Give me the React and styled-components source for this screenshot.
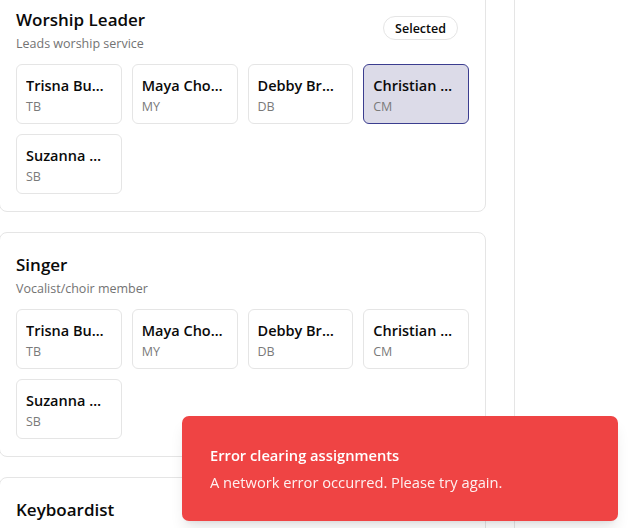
import React from "react";
import styled, { createGlobalStyle } from "styled-components";

const Global = createGlobalStyle`
  html, body { margin: 0; padding: 0; background: #ffffff; }
  body {
    font-family: "Open Sans", "Noto Sans", sans-serif;
    color: #0a0a0a;
    overflow: hidden;
    height: 528px;
  }
  * { box-sizing: border-box; }
`;

const Page = styled.div`
  display: flex;
  height: 528px;
  overflow: hidden;
`;

const Main = styled.main`
  flex: 0 0 515px;
  margin-left: -1px;
  padding-right: 28px;
  display: flex;
  flex-direction: column;
  gap: 20px;
  margin-top: -13px;
`;

const Aside = styled.aside`
  flex: 1;
  border-left: 1px solid #e5e5e5;
  background: #ffffff;
`;

const Card = styled.section`
  border: 1px solid #e5e5e5;
  border-radius: 8px;
  padding: 20px 16px 17px;
  background: #fff;
  flex-shrink: 0;
`;

const Header = styled.div`
  display: flex;
  align-items: flex-start;
  justify-content: space-between;
`;

const TitleBlock = styled.div`
  display: flex;
  flex-direction: column;
`;

const Title = styled.h3`
  margin: 0;
  font-size: 17px;
  line-height: 24px;
  font-weight: 600;
`;

const Subtitle = styled.p`
  margin: 3px 0 0;
  font-size: 12.5px;
  line-height: 18px;
  color: #737373;
`;

const Badge = styled.span`
  margin: 8px 11px 0 0;
  height: 24px;
  padding: 0 11px;
  border: 1px solid #e5e5e5;
  border-radius: 999px;
  font-size: 12.5px;
  font-weight: 600;
  display: inline-flex;
  align-items: center;
`;

const Grid = styled.div`
  margin-top: 11px;
  display: grid;
  grid-template-columns: repeat(4, 1fr);
  gap: 10px;
`;

const Tile = styled.button`
  font-family: inherit;
  text-align: left;
  height: 60px;
  padding: 10px 11px 0 9px;
  border-radius: 6px;
  border: 1px solid ${(p) => (p.$selected ? "#3b3d8f" : "#e5e5e5")};
  background: ${(p) => (p.$selected ? "#dcdbe8" : "#ffffff")};
  display: flex;
  flex-direction: column;
  justify-content: flex-start;
  gap: 1px;
  min-width: 0;
  cursor: pointer;
`;

const Name = styled.span`
  display: block;
  font-size: 14.5px;
  line-height: 21px;
  font-weight: 600;
  color: #0a0a0a;
  white-space: nowrap;
  overflow: hidden;
  text-overflow: ellipsis;
`;

const Initials = styled.span`
  display: block;
  font-size: 12.5px;
  line-height: 20px;
  color: #7a7a7a;
`;

const Toast = styled.div`
  position: fixed;
  right: 13px;
  bottom: 7px;
  width: 436px;
  height: 105px;
  background: #ef4444;
  color: #fff;
  border-radius: 7px;
  padding: 29px 28px 28px;
  display: flex;
  flex-direction: column;
  gap: 7px;
  box-shadow: 0 10px 15px -3px rgba(0,0,0,0.1), 0 4px 6px -4px rgba(0,0,0,0.1);
`;

const ToastTitle = styled.div`
  font-size: 14.7px;
  line-height: 20px;
  font-weight: 600;
`;

const ToastMessage = styled.div`
  font-size: 14.7px;
  line-height: 20px;
  opacity: 0.92;
`;

const members = [
  { name: "Trisna Budiman", initials: "TB" },
  { name: "Maya Chowdhury", initials: "MY" },
  { name: "Debby Brownson", initials: "DB" },
  { name: "Christian Manurung", initials: "CM" },
  { name: "Suzanna Butarbutar", initials: "SB" },
];

const roles = [
  { title: "Worship Leader", desc: "Leads worship service", selected: "CM" },
  { title: "Singer", desc: "Vocalist/choir member" },
  { title: "Keyboardist", desc: "Plays the keyboard/piano" },
];

export default function App() {
  return (
    <>
      <Global />
      <Page>
        <Main>
          {roles.map((r) => (
            <Card key={r.title}>
              <Header>
                <TitleBlock>
                  <Title>{r.title}</Title>
                  <Subtitle>{r.desc}</Subtitle>
                </TitleBlock>
                {r.selected && <Badge>Selected</Badge>}
              </Header>
              <Grid>
                {members.map((m) => (
                  <Tile key={m.initials} $selected={r.selected === m.initials}>
                    <Name>{m.name}</Name>
                    <Initials>{m.initials}</Initials>
                  </Tile>
                ))}
              </Grid>
            </Card>
          ))}
        </Main>
        <Aside />
      </Page>
      <Toast role="alert">
        <ToastTitle>Error clearing assignments</ToastTitle>
        <ToastMessage>A network error occurred. Please try again.</ToastMessage>
      </Toast>
    </>
  );
}
